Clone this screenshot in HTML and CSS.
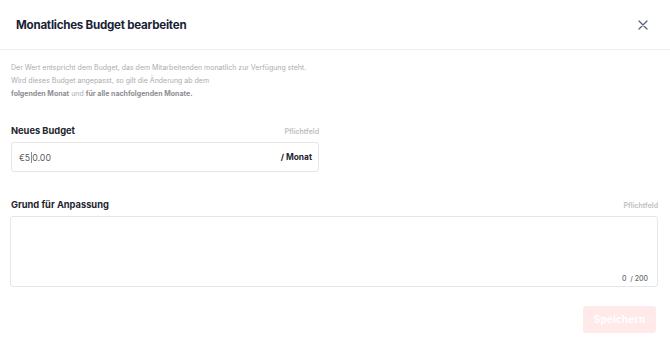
FILE: index.html
```
<!DOCTYPE html>
<html lang="de">
<head>
<meta charset="utf-8">
<link rel="stylesheet" href="styles.css">
</head>
<body>
<div class="modal">
  <header class="header">
    <h1 class="title">Monatliches Budget bearbeiten</h1>
    <button class="close" aria-label="Schließen">
      <svg width="10" height="10" viewBox="0 0 10 10"><path d="M1 1L9 9M9 1L1 9" stroke="#5b6275" stroke-width="1.3" stroke-linecap="round"/></svg>
    </button>
  </header>
  <div class="body">
    <p class="desc">Der Wert entspricht dem Budget, das dem Mitarbeitenden monatlich zur Verfügung steht.<br>Wird dieses Budget angepasst, so gilt die Änderung ab dem<br><b>folgenden Monat</b> und <b>für alle nachfolgenden Monate.</b></p>

    <div class="field field-narrow">
      <div class="label-row"><span class="label">Neues Budget</span><span class="req">Pflichtfeld</span></div>
      <div class="input"><span class="value">€5<span class="caret"></span>0.00</span><span class="suffix">/ Monat</span></div>
    </div>

    <div class="field field-wide">
      <div class="label-row"><span class="label">Grund für Anpassung</span><span class="req">Pflichtfeld</span></div>
      <div class="textarea"><span class="count">0 &nbsp;/ 200</span></div>
    </div>

    <div class="actions"><button class="save">Speichern</button></div>
  </div>
</div>
</body>
</html>
```
FILE: styles.css
```
* { box-sizing: border-box; }
html, body { margin: 0; padding: 0; background: #fff; }
body { font-family: "Inter", "Lato", sans-serif; width: 670px; height: 344px; overflow: hidden; }
.header {
  height: 50px;
  display: flex;
  align-items: center;
  justify-content: space-between;
  padding: 0 22px 0 16px;
  border-bottom: 1px solid #f1f1f3;
}
.title { margin: 0; font-size: 11.6px; font-weight: 700; color: #1a1f36; letter-spacing: -0.25px; }
.close { border: 0; background: none; padding: 0; width: 10px; height: 10px; display: flex; cursor: pointer; }
.body { padding: 11px 11px 0 11px; }
.desc { margin: 0; font-size: 7px; line-height: 13px; color: #acacb0; }
.desc b { color: #8d8d92; font-weight: 700; }
.field { margin-top: 25px; }
.field-narrow { width: 308px; }
.field-wide { margin-top: 27px; width: 648px; margin-left: -1px; }
.label-row { display: flex; justify-content: space-between; align-items: baseline; height: 16px; }
.field-wide .label-row { padding-left: 1px; }
.label { font-size: 9.3px; font-weight: 700; color: #23252e; }
.req { font-size: 7px; font-weight: 600; color: #bdbdc2; }
.input {
  margin-top: 1px;
  height: 30px;
  border: 1px solid #e6e6e9;
  border-radius: 3px;
  display: flex;
  align-items: center;
  justify-content: space-between;
  padding: 0 6px 0 7px;
}
.value { font-size: 8.8px; color: #5c5c62; display: inline-flex; align-items: center; }
.caret { display: inline-block; width: 1px; height: 11px; background: #8a8a8f; margin: 0 0.5px; }
.suffix { font-size: 8.4px; font-weight: 700; color: #23252e; }
.textarea {
  margin-top: 1px;
  height: 71px;
  border: 1px solid #e6e6e9;
  border-radius: 3px;
  display: flex;
  align-items: flex-end;
  justify-content: flex-end;
  padding: 0 9px 3px 0;
}
.count { font-size: 7px; color: #6b6b70; font-weight: 500; }
.actions { display: flex; justify-content: flex-end; margin-top: 19px; padding-right: 3px; }
.save {
  width: 73px;
  height: 27px;
  border: 0;
  border-radius: 3px;
  background: #ffe9e9;
  color: #fff;
  font-family: "Inter", "Lato", sans-serif;
  font-size: 9.8px;
  font-weight: 700;
  letter-spacing: 0.3px;
}
```
